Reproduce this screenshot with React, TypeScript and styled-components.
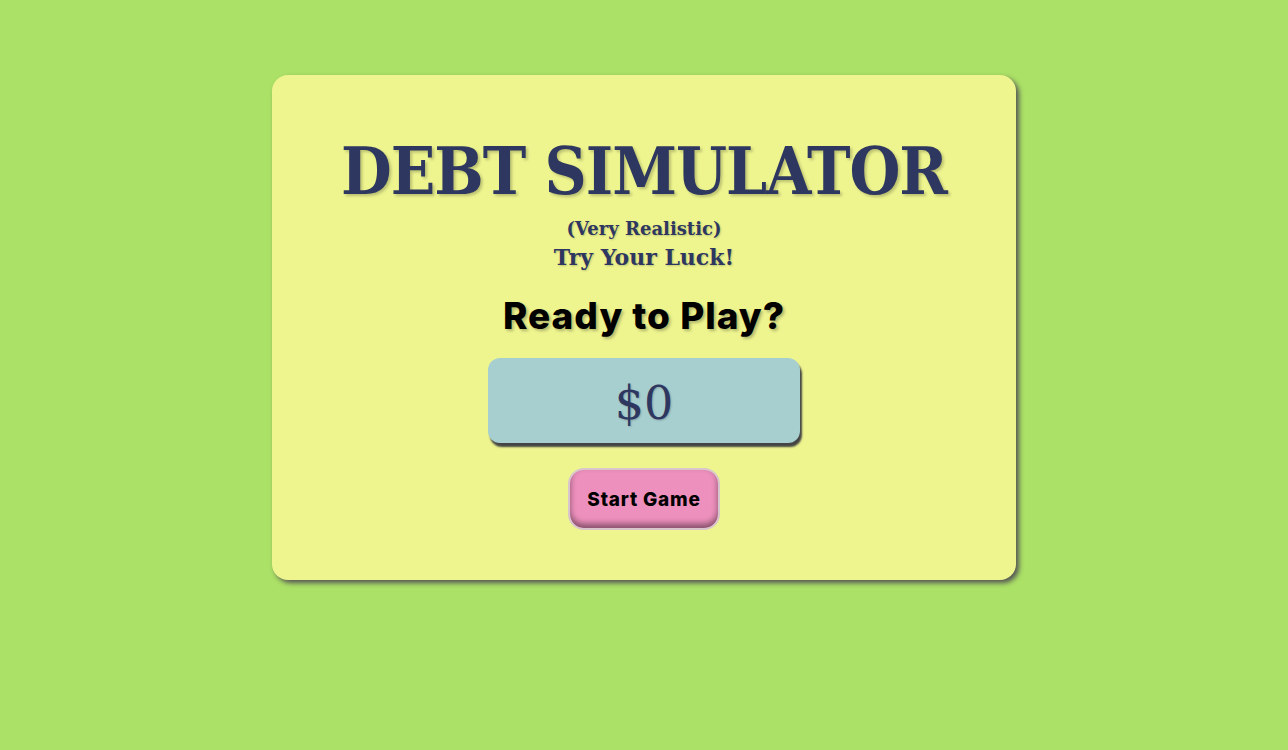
import React from "react";
import styled, { createGlobalStyle } from "styled-components";

const Global = createGlobalStyle`
  html, body { margin: 0; padding: 0; }
  body {
    background: #abe166;
    min-height: 750px;
  }
`;

const Page = styled.main`
  display: flex;
  justify-content: center;
  padding-top: 75px;
`;

const Card = styled.section`
  width: 744px;
  height: 505px;
  box-sizing: border-box;
  background: #eef58f;
  border-radius: 16px;
  box-shadow: 3px 3px 5px #555;
  display: flex;
  flex-direction: column;
  align-items: center;
  padding-top: 58px;
`;

const Title = styled.h1`
  margin: 0 0 7px;
  font-family: "DejaVu Serif", serif;
  font-stretch: condensed;
  font-weight: 700;
  font-size: 65px;
  line-height: 76px;
  color: #2e375f;
  text-shadow: 2px 2px 3px rgba(0, 0, 0, 0.22);
  letter-spacing: -1px;
`;

const Sub = styled.p<{ $size: number }>`
  margin: 0;
  font-family: "DejaVu Serif", serif;
  font-weight: 700;
  font-size: ${(p) => p.$size}px;
  line-height: ${(p) => p.$size + 8}px;
  color: #2e375f;
  text-shadow: 1px 1px 2px rgba(0, 0, 0, 0.2);
`;

const Ready = styled.h2`
  margin: 22px 0 0;
  font-family: "Inter", sans-serif;
  font-weight: 800;
  font-size: 37px;
  letter-spacing: 1px;
  line-height: 44px;
  color: #000;
  text-shadow: 2px 2px 3px rgba(0, 0, 0, 0.25);
`;

const Amount = styled.div`
  margin-top: 20px;
  width: 312px;
  height: 85px;
  background: #a8cfd0;
  border-radius: 12px;
  box-shadow: 2px 4px 2px #444;
  display: flex;
  align-items: center;
  justify-content: center;
  font-family: "DejaVu Serif", serif;
  font-size: 46px;
  padding-top: 4px;
  box-sizing: border-box;
  color: #2e375f;
  text-shadow: 1px 1px 2px rgba(0, 0, 0, 0.2);
`;

const StartButton = styled.button`
  margin-top: 25px;
  width: 152px;
  height: 62px;
  background: #ee90bd;
  border: 2px solid #d8c6cc;
  border-radius: 16px;
  box-shadow: inset 0 -4px 6px rgba(0, 0, 0, 0.45);
  font-family: "Inter", sans-serif;
  font-weight: 800;
  font-size: 19px;
  letter-spacing: 0.8px;
  color: #000;
  cursor: pointer;
`;

export default function App() {
  return (
    <>
      <Global />
      <Page>
        <Card>
          <Title>DEBT SIMULATOR</Title>
          <Sub $size={18}>(Very Realistic)</Sub>
          <Sub $size={22}>Try Your Luck!</Sub>
          <Ready>Ready to Play?</Ready>
          <Amount>$0</Amount>
          <StartButton>Start Game</StartButton>
        </Card>
      </Page>
    </>
  );
}
